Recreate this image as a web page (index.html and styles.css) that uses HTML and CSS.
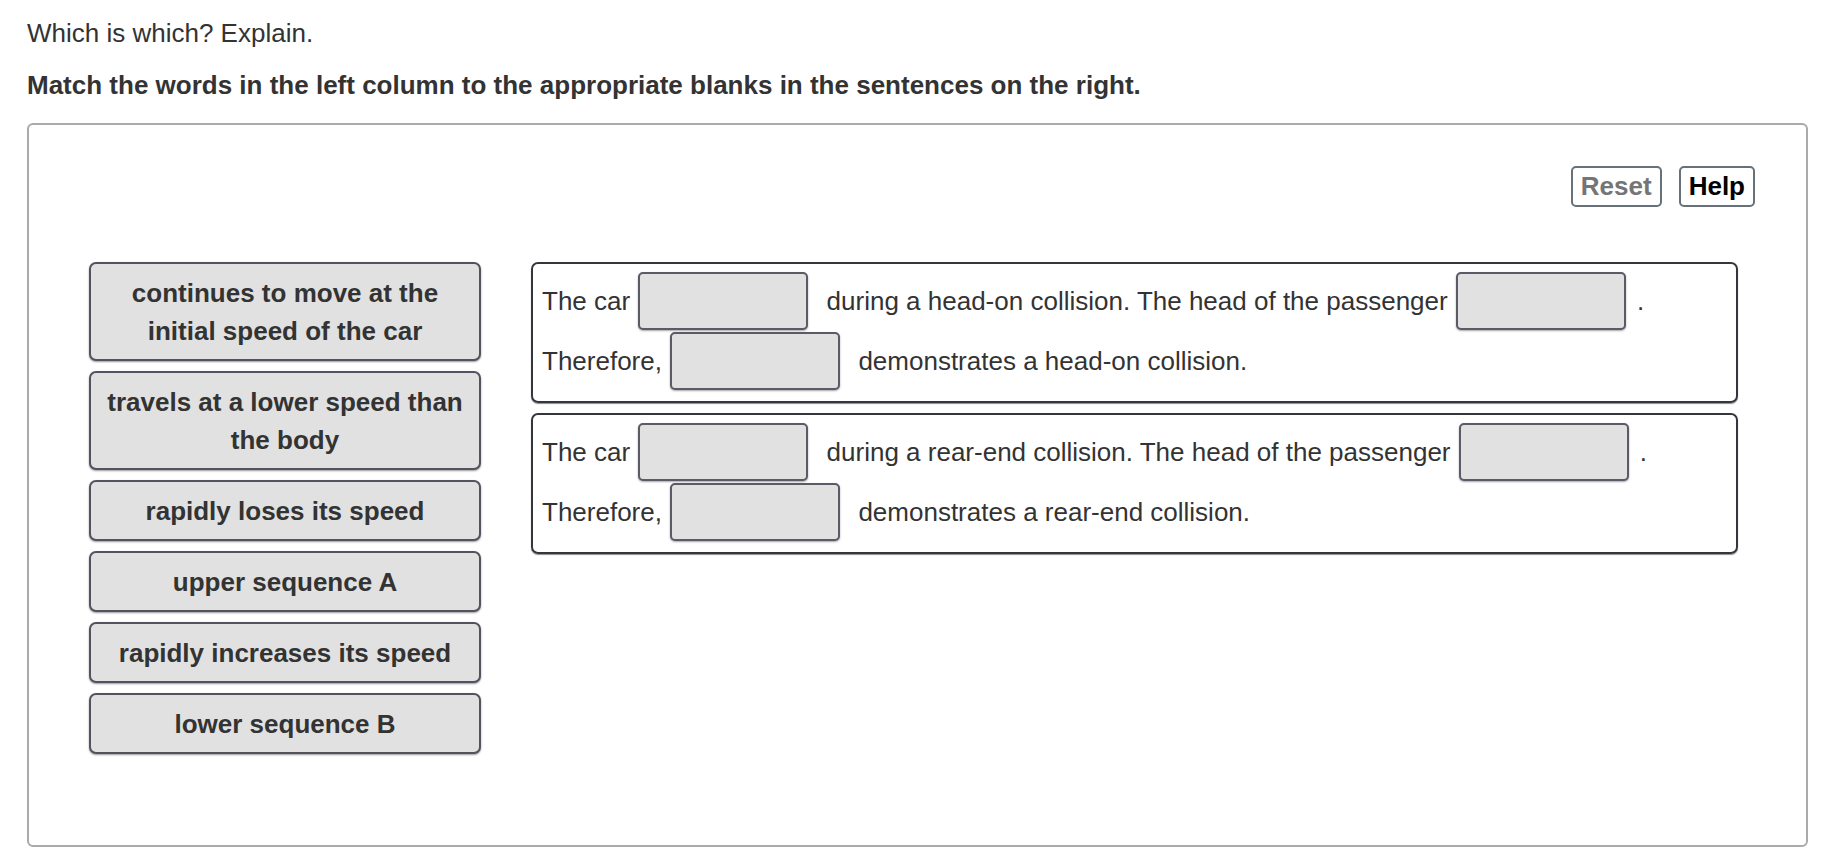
FILE: index.html
```html
<!DOCTYPE html>
<html>
<head>
<meta charset="utf-8">
<link rel="stylesheet" href="styles.css">
</head>
<body>
<p class="intro">Which is which? Explain.</p>
<p class="instr">Match the words in the left column to the appropriate blanks in the sentences on the right.</p>
<div class="panel">
  <div class="toolbar">
    <button class="btn btn-reset">Reset</button>
    <button class="btn btn-help">Help</button>
  </div>
  <div class="work">
    <div class="choices">
      <div class="chip">continues to move at the initial speed of the car</div>
      <div class="chip">travels at a lower speed than the body</div>
      <div class="chip">rapidly loses its speed</div>
      <div class="chip">upper sequence A</div>
      <div class="chip">rapidly increases its speed</div>
      <div class="chip">lower sequence B</div>
    </div>
    <div class="sentences">
      <div class="sbox">
        <div class="row">The car <span class="blank"></span> during a head-on collision. The head of the passenger <span class="blank"></span>.</div>
        <div class="row">Therefore, <span class="blank"></span> demonstrates a head-on collision.</div>
      </div>
      <div class="sbox">
        <div class="row">The car <span class="blank"></span> during a rear-end collision. The head of the passenger <span class="blank"></span>.</div>
        <div class="row">Therefore, <span class="blank"></span> demonstrates a rear-end collision.</div>
      </div>
    </div>
  </div>
</div>
</body>
</html>
```
FILE: styles.css
```css
html, body {
  margin: 0;
  padding: 0;
  background: #fff;
}
body {
  font-family: "Liberation Sans", Arial, Helvetica, sans-serif;
  font-size: 26px;
  color: #333;
  padding: 14px 24px 0 27px;
}
.intro {
  margin: 0;
  line-height: 38px;
}
.instr {
  margin: 14px 0 0 0;
  line-height: 38px;
  font-weight: bold;
}
.panel {
  margin-top: 19px;
  height: 724px;
  box-sizing: border-box;
  border: 2px solid #aaaaaa;
  border-radius: 6px;
  padding-top: 41px;
}
.toolbar {
  display: flex;
  justify-content: flex-end;
  gap: 17px;
  padding-right: 51px;
}
.btn {
  font-family: "Liberation Sans", Arial, Helvetica, sans-serif;
  font-size: 26px;
  font-weight: bold;
  background: #fff;
  border: 2px solid #66717a;
  border-radius: 5px;
  height: 41px;
  padding: 0 8px;
  line-height: 35px;
  margin: 0;
}
.btn-reset { color: #757575; }
.btn-help { color: #000; }
.work {
  display: flex;
  margin-top: 55px;
  padding-left: 60px;
  gap: 50px;
  align-items: flex-start;
}
.choices {
  width: 392px;
  display: flex;
  flex-direction: column;
  gap: 10px;
}
.chip {
  box-sizing: border-box;
  background: #e1e1e1;
  border: 2px solid #52535e;
  border-radius: 7px;
  box-shadow: 0 1px 2px rgba(0,0,0,0.4);
  padding: 9.5px 10px;
  line-height: 38px;
  text-align: center;
  font-weight: bold;
  color: #333;
}
.sentences {
  width: 1207px;
  display: flex;
  flex-direction: column;
  gap: 10px;
}
.sbox {
  box-sizing: border-box;
  border: 2px solid #33373c;
  border-radius: 7px;
  box-shadow: 0 1px 1px rgba(0,0,0,0.45);
  padding: 7px 9px 10px 9px;
}
.row {
  height: 60px;
  line-height: 60px;
  white-space: nowrap;
}
.blank {
  display: inline-block;
  vertical-align: middle;
  box-sizing: border-box;
  width: 170px;
  height: 58px;
  margin: -4px 11px 0 1px;
  background: #e1e1e1;
  border: 2px solid #5a5b66;
  border-radius: 5px;
  box-shadow: 0 1px 2px rgba(0,0,0,0.35);
}
```
